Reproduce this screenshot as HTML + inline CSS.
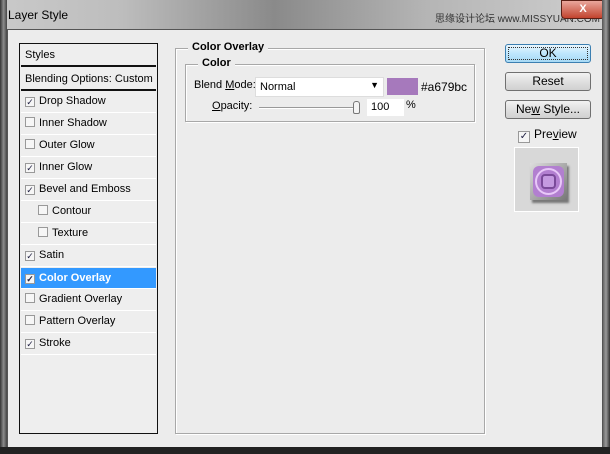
<!DOCTYPE html>
<html><head><style>
*{margin:0;padding:0;box-sizing:border-box}
body{width:610px;height:454px;overflow:hidden;background:#2a2a30;font-family:"Liberation Sans",sans-serif;font-size:11px;color:#000;position:relative}
.title{position:absolute;left:0;top:0;width:610px;height:30px;background:linear-gradient(90deg,#c9c9c9 0%,#bdbdbd 20%,#8a8a8a 45%,#b5b5b5 70%,#cfcfcf 100%)}
.title span{position:absolute;left:8px;top:8px;font-size:12px}
.wm{position:absolute;left:435px;top:10px;font-size:10px;color:#333;font-family:"Liberation Sans","Noto Sans CJK SC",sans-serif}
.close{position:absolute;left:561px;top:0;width:44px;height:19px;background:linear-gradient(#e9a79c,#c2432e);border-radius:0 0 4px 4px;border:1px solid #5a1f15;color:#fff;font-weight:bold;text-align:center;font-size:11px;line-height:16px}
.frameL{position:absolute;left:0;top:0;width:7px;height:454px;background:linear-gradient(90deg,#333,#8c8c8c,#444)}
.frameR{position:absolute;right:0;top:0;width:8px;height:454px;background:linear-gradient(90deg,#555,#9a9a9a,#333)}
.content{position:absolute;left:7px;top:29px;width:596px;height:419px;background:#ececec;border:1px solid #555}
.bottom{position:absolute;left:0;top:447px;width:610px;height:7px;background:#222}
.list{position:absolute;left:19px;top:43px;width:139px;height:391px;border:1px solid #111;background:#eeeeee}
.row{position:absolute;left:1px;width:135px;height:22px;border-bottom:1px solid #fff;line-height:21px;padding-left:4px;font-size:11px}
.cb{display:inline-block;width:10px;height:10px;border:1px solid #999;background:#f6f6f6;vertical-align:-1px;margin-right:4px;position:relative;font-size:9px;line-height:8px;color:#224;text-align:center}
.sel{background:#3399ff;color:#fff;font-weight:bold}
.grp{position:absolute;border:1px solid #a8a8a8;box-shadow:1px 1px 0 #fff inset,1px 1px 0 #fff}
.lg{position:absolute;background:#ececec;font-weight:bold;font-size:11px;padding:0 4px}
.btn{position:absolute;left:505px;width:86px;height:19px;border:1px solid #707070;border-radius:3px;background:linear-gradient(#f2f2f2,#e0e0e0 50%,#d0d0d0);text-align:center;font-size:12px;line-height:17px}
</style></head><body>
<div class="title"><span>Layer Style</span><div class="wm">思缘设计论坛 www.MISSYUAN.COM</div><div class="close">X</div></div>
<div class="frameL"></div><div class="frameR"></div>
<div class="content"></div>
<div class="bottom"></div>

<div class="list">
<div class="row" style="top:0;height:23px;line-height:22px;border-bottom:2px solid #111">Styles</div>
<div class="row" style="top:25px;border-bottom:2px solid #111">Blending Options: Custom</div>
<div class="row" style="top:47px"><span class="cb">✓</span>Drop Shadow</div>
<div class="row" style="top:69px"><span class="cb"></span>Inner Shadow</div>
<div class="row" style="top:91px"><span class="cb"></span>Outer Glow</div>
<div class="row" style="top:113px"><span class="cb">✓</span>Inner Glow</div>
<div class="row" style="top:135px"><span class="cb">✓</span>Bevel and Emboss</div>
<div class="row" style="top:157px;padding-left:17px"><span class="cb"></span>Contour</div>
<div class="row" style="top:179px;padding-left:17px"><span class="cb"></span>Texture</div>
<div class="row" style="top:201px"><span class="cb">✓</span>Satin</div>
<div class="row sel" style="top:224px;height:21px"><span class="cb">✓</span>Color Overlay</div>
<div class="row" style="top:245px"><span class="cb"></span>Gradient Overlay</div>
<div class="row" style="top:267px"><span class="cb"></span>Pattern Overlay</div>
<div class="row" style="top:289px"><span class="cb">✓</span>Stroke</div>
</div>

<div class="grp" style="left:175px;top:48px;width:310px;height:386px"></div>
<div class="lg" style="left:188px;top:41px">Color Overlay</div>
<div class="grp" style="left:185px;top:64px;width:290px;height:58px"></div>
<div class="lg" style="left:198px;top:57px">Color</div>
<div style="position:absolute;left:194px;top:79px">Blend <u>M</u>ode:</div>
<div style="position:absolute;left:255px;top:77px;width:129px;height:20px;background:#fff;border:1px solid #ddd;padding:3px 0 0 4px">Normal<span style="position:absolute;right:4px;top:2px;font-size:9px">▼</span></div>
<div style="position:absolute;left:387px;top:78px;width:31px;height:17px;background:#a679bc"></div>
<div style="position:absolute;left:421px;top:80px;font-size:12px">#a679bc</div>
<div style="position:absolute;left:212px;top:100px"><u>O</u>pacity:</div>
<div style="position:absolute;left:259px;top:107px;width:98px;height:2px;border-top:1px solid #999;border-bottom:1px solid #fff"></div>
<div style="position:absolute;left:353px;top:101px;width:7px;height:13px;border:1px solid #777;border-radius:3px 3px 2px 2px;background:#f4f4f4"></div>
<div style="position:absolute;left:367px;top:99px;width:37px;height:17px;background:#fff;padding:2px 0 0 4px">100</div>
<div style="position:absolute;left:406px;top:99px">%</div>

<div class="btn" style="top:44px;border-color:#3c7fb1;background:linear-gradient(#eaf6fd,#bee6fd 50%,#a7d9f5)"><div style="position:absolute;inset:2px;border:1px dotted #333"></div>OK</div>
<div class="btn" style="top:72px">Reset</div>
<div class="btn" style="top:100px">Ne<u>w</u> Style...</div>
<div style="position:absolute;left:518px;top:127px;font-size:12px"><span class="cb" style="width:12px;height:12px;font-size:10px;line-height:10px">✓</span>Pre<u>v</u>iew</div>
<div style="position:absolute;left:514px;top:147px;width:65px;height:65px;background:#d8d8d8;border:1px solid #fff">
<div style="position:absolute;left:15px;top:15px;width:37px;height:37px;background:linear-gradient(135deg,#ddd,#777);box-shadow:2px 3px 2px #777">
<div style="position:absolute;left:3px;top:3px;width:31px;height:31px;background:#b27fd0;border-radius:6px">
<div style="position:absolute;left:2px;top:2px;width:27px;height:27px;border:2px solid #e8c8f8;border-radius:50%"></div>
<div style="position:absolute;left:8px;top:8px;width:15px;height:15px;border:2px solid #7a4a99;border-radius:4px;background:#c49ae0"></div>
</div></div></div>
</body></html>
